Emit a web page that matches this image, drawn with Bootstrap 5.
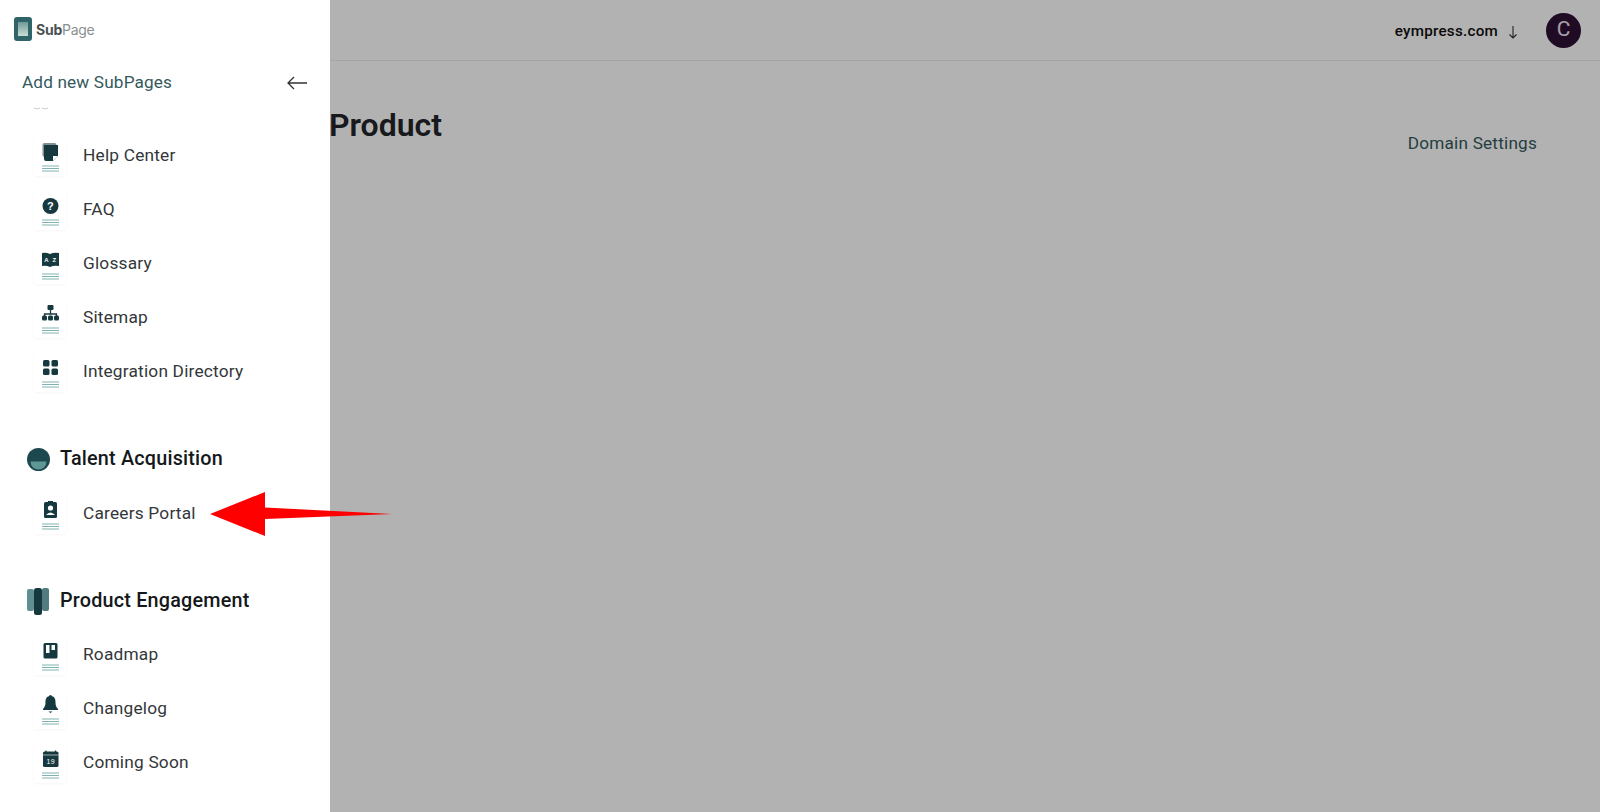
<!doctype html>
<html lang="en">
<head>
<meta charset="utf-8">
<title>SubPage</title>
<link href="https://cdn.jsdelivr.net/npm/bootstrap@5.3.0/dist/css/bootstrap.min.css" rel="stylesheet">
<style>
html,body{height:100%;overflow:hidden}
body{font-family:"Roboto","Liberation Sans",sans-serif;color:#212529;background:#fff;position:relative}
.topstrip{height:61px;border-bottom:1px solid #e9ebed;padding:3px 19px 0 0}
.domain-name{font-size:15.2px;font-weight:500;color:#111;letter-spacing:.25px}
.avatar-c{width:35px;height:35px;background:#2f1136;color:#efe6ef;font-size:21px;font-weight:400;margin-top:-3px;margin-left:26px}
.page-head{padding:40px 63px 0 329px}
.page-title{font-size:32px;font-weight:600;color:#212529;margin:0;line-height:48px}
.domain-link{font-size:17.2px;color:#34595c;margin-top:30px;text-decoration:none;letter-spacing:.2px}
.dim-layer{position:absolute;inset:0;background:rgba(0,0,0,.3)}
.side-panel{position:absolute;left:0;top:0;bottom:0;width:330px;background:#fff;overflow:hidden}
.logo-row{height:57px;padding:1px 0 0 14px}
.logo-word{font-size:14px;color:#8a8f8f;font-family:"Inter",sans-serif;letter-spacing:-.25px}
.logo-word b{color:#4b5253;font-weight:700}
.add-row{height:50px;padding:2px 22px 0}
.add-title{font-size:17.2px;color:#34595c;letter-spacing:.15px}
.scroll-list{height:705px;overflow:hidden}
.tiny-rest{height:4px;margin:0 0 0 33px;overflow:hidden}
.tiny-rest svg{display:block}
.item-row{height:54px;padding-left:34px;color:#33373a;font-size:17.3px;letter-spacing:.2px}
.tile{width:32px;height:39px;background:#fff;box-shadow:0 1px 3px rgba(0,0,0,.04);border-radius:2px;margin-right:17px}
.tile svg{display:block}
.group-head{padding-left:27px;height:32px;font-size:19.8px;font-weight:500;color:#15181a;letter-spacing:.2px}
.group-head svg{margin-right:10px}
.gap-a{height:18px}
.gap-b{height:44px}
.gap-c{height:12px}
.gap-d{height:11px}
.pointer-arrow{position:absolute;left:205px;top:488px}
</style>
</head>
<body>
<div class="d-flex justify-content-end align-items-center topstrip">
  <span class="domain-name">eympress.com</span>
  <svg class="ms-2" width="14" height="16" viewBox="0 0 14 16" fill="none" stroke="#333" stroke-width="1.1"><path d="M7 2v12M3.5 10.500 7 14l3.500-3.500"/></svg>
  <span class="avatar-c rounded-circle d-flex align-items-center justify-content-center">C</span>
</div>
<div class="d-flex justify-content-between page-head">
  <h1 class="page-title">Product</h1>
  <a class="domain-link" href="#">Domain Settings</a>
</div>
<div class="dim-layer"></div>

<aside class="side-panel d-flex flex-column">
  <div class="d-flex align-items-center logo-row">
    <svg width="18" height="24" viewBox="0 0 18 24" class="me-1"><defs><linearGradient id="lg" x1="0" y1="0" x2="0" y2="1"><stop offset="0" stop-color="#6f9a98"/><stop offset="1" stop-color="#c9ddd4"/></linearGradient></defs><rect width="18" height="24" rx="3" fill="#2f6468"/><rect x="4" y="5" width="10" height="14" fill="url(#lg)"/></svg>
    <span class="logo-word"><b>Sub</b>Page</span>
  </div>
  <div class="d-flex align-items-center justify-content-between add-row">
    <span class="add-title">Add new SubPages</span>
    <svg width="22" height="14" viewBox="0 0 22 14" fill="none" stroke="#333" stroke-width="1.3"><path d="M21 7H2M8 1 2 7l6 6"/></svg>
  </div>
  <div class="scroll-list">
    <div class="tiny-rest"><svg width="18" height="4" viewBox="0 0 18 4" fill="none" stroke="#c9cfcf" stroke-width="1"><path d="M1 1q3 2 6 0M9 1q3 2 6 0"/></svg></div>
    <div class="gap-a"></div>
    <div class="d-flex align-items-center item-row"><span class="tile"><svg width="32" height="40" viewBox="0 -1 32 40"><rect x="8.500" y="5" width="14" height="14" rx="2" fill="#7f8f92"/><path d="M10 7h14v11l-5 5h-7a2 2 0 0 1-2-2z" fill="#16393f"/><path d="M19 23l5-5h-5z" fill="#fff"/><path d="M8 28h17M8 30.500h17M8 33h17" stroke="#5f9ea0" stroke-width=".8"/></svg></span>Help Center</div>
    <div class="d-flex align-items-center item-row"><span class="tile"><svg width="32" height="40" viewBox="0 -1 32 40"><circle cx="16.500" cy="14" r="8" fill="#16393f"/><text x="16.500" y="18" font-size="11" font-weight="700" text-anchor="middle" fill="#fff" font-family="Liberation Sans">?</text><path d="M8 28h17M8 30.500h17M8 33h17" stroke="#5f9ea0" stroke-width=".8"/></svg></span>FAQ</div>
    <div class="d-flex align-items-center item-row"><span class="tile"><svg width="32" height="40" viewBox="0 -1 32 40"><path d="M8 7q4-1 8 1 4-2 9-1v13q-5-1-9 1-4-2-8-1z" fill="#16393f"/><text x="12.500" y="16" font-size="6" font-weight="700" text-anchor="middle" fill="#fff" font-family="Liberation Sans">A</text><text x="20.500" y="16" font-size="6" font-weight="700" text-anchor="middle" fill="#fff" font-family="Liberation Sans">Z</text><path d="M8 28h17M8 30.500h17M8 33h17" stroke="#5f9ea0" stroke-width=".8"/></svg></span>Glossary</div>
    <div class="d-flex align-items-center item-row"><span class="tile"><svg width="32" height="40" viewBox="0 -1 32 40"><rect x="13.500" y="5" width="6" height="5" rx="1" fill="#16393f"/><path d="M16.500 10v4M10.500 16v-2h12v2" fill="none" stroke="#16393f" stroke-width="1.300"/><rect x="8" y="15.500" width="5" height="5" rx="1.500" fill="#16393f"/><rect x="14" y="15.500" width="5" height="5" rx="1.500" fill="#16393f"/><rect x="20" y="15.500" width="5" height="5" rx="1.500" fill="#16393f"/><path d="M8 28h17M8 30.500h17M8 33h17" stroke="#5f9ea0" stroke-width=".8"/></svg></span>Sitemap</div>
    <div class="d-flex align-items-center item-row"><span class="tile"><svg width="32" height="40" viewBox="0 -1 32 40"><rect x="9" y="6" width="6.500" height="6.500" rx="1.500" fill="#16393f"/><rect x="17.500" y="6" width="6.500" height="6.500" rx="1.500" fill="#16393f"/><rect x="9" y="14.500" width="6.500" height="6.500" rx="1.500" fill="#16393f"/><rect x="17.500" y="14.500" width="6.500" height="6.500" rx="1.500" fill="#16393f"/><path d="M8 28h17M8 30.500h17M8 33h17" stroke="#5f9ea0" stroke-width=".8"/></svg></span>Integration Directory</div>
    <div class="gap-b"></div>
    <div class="d-flex align-items-center group-head"><svg width="23" height="23" viewBox="0 0 23 23"><circle cx="11.500" cy="11.500" r="11.500" fill="#1d484e"/><path d="M3.500 13.500h16a8 8 0 0 1-16 0z" fill="#5f9795"/></svg>Talent Acquisition</div>
    <div class="gap-c"></div>
    <div class="d-flex align-items-center item-row"><span class="tile"><svg width="32" height="40" viewBox="0 -1 32 40"><rect x="10" y="6" width="13" height="16" rx="1.500" fill="#16393f"/><rect x="14" y="5" width="5" height="2" fill="#16393f"/><circle cx="16.500" cy="12" r="2.600" fill="#fff"/><path d="M12 19q4.500-5 9 0z" fill="#fff"/><path d="M8 28h17M8 30.500h17M8 33h17" stroke="#5f9ea0" stroke-width=".8"/></svg></span>Careers Portal</div>
    <div class="gap-b"></div>
    <div class="d-flex align-items-center group-head"><svg width="23" height="27" viewBox="0 0 23 27"><rect x="0" y="1" width="7" height="22" rx="2" fill="#5f8f92"/><rect x="15" y="0" width="7" height="23" rx="2" fill="#527c80"/><rect x="7" y="0" width="8" height="27" rx="2.500" fill="#16393f"/></svg>Product Engagement</div>
    <div class="gap-d"></div>
    <div class="d-flex align-items-center item-row"><span class="tile"><svg width="32" height="40" viewBox="0 -1 32 40"><rect x="9.500" y="6" width="14" height="15.500" rx="1.500" fill="#16393f"/><rect x="12" y="8" width="3.500" height="8" fill="#fff"/><rect x="17.500" y="8" width="3.500" height="5" fill="#fff"/><path d="M8 28h17M8 30.500h17M8 33h17" stroke="#5f9ea0" stroke-width=".8"/></svg></span>Roadmap</div>
    <div class="d-flex align-items-center item-row"><span class="tile"><svg width="32" height="40" viewBox="0 -1 32 40"><circle cx="16.500" cy="5.500" r="1.500" fill="#16393f"/><path d="M16.500 5c4 0 5 3 5 6 0 4 1 5 2.500 7v1H9v-1c1.500-2 2.500-3 2.500-7 0-3 1-6 5-6z" fill="#16393f"/><path d="M14.500 20.500h4l-2 1.500z" fill="#16393f"/><path d="M8 28h17M8 30.500h17M8 33h17" stroke="#5f9ea0" stroke-width=".8"/></svg></span>Changelog</div>
    <div class="d-flex align-items-center item-row"><span class="tile"><svg width="32" height="40" viewBox="0 -1 32 40"><rect x="9" y="6.500" width="15.500" height="15.500" rx="1.500" fill="#16393f"/><path d="M12 5.500v2M21.500 5.500v2" stroke="#16393f" stroke-width="1.200"/><path d="M9 10h15.500" stroke="#fff" stroke-width=".6"/><text x="16.700" y="19" font-size="7" text-anchor="middle" fill="#fff" font-family="Liberation Sans">19</text><path d="M8 28h17M8 30.500h17M8 33h17" stroke="#5f9ea0" stroke-width=".8"/></svg></span>Coming Soon</div>
  </div>
</aside>

<svg class="pointer-arrow" width="190" height="52" viewBox="0 0 190 52"><path d="M5 26 60 4v15.500L187 26 60 31v17z" fill="#fe0000"/></svg>
<script src="https://cdn.jsdelivr.net/npm/bootstrap@5.3.0/dist/js/bootstrap.bundle.min.js"></script>
</body>
</html>
